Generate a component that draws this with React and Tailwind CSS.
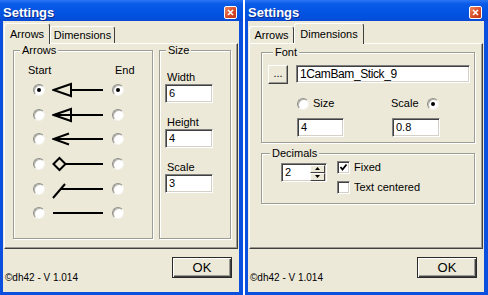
import { Fragment } from 'react'

const ARROWS = ['closed', 'closedLine', 'open', 'diamond', 'slash', 'line']

function CloseButton() {
  return (
    <span className="w-[13px] h-[13px] rounded-[2px] border border-white bg-[linear-gradient(135deg,#EC8A66_0%,#DA4A26_55%,#C2361A_100%)] flex items-center justify-center">
      <svg width="7" height="7" viewBox="0 0 7 7">
        <path d="M1 1 L6 6 M6 1 L1 6" stroke="white" strokeWidth="1.6" />
      </svg>
    </span>
  )
}

function TitleBar() {
  return (
    <div className="h-[21px] flex items-center justify-between pl-[3px] pr-[6px] pt-[3px] bg-[linear-gradient(180deg,#2B76F4_0%,#0A5BE8_18%,#0455E3_50%,#0250DD_85%,#0A48D2_100%)]">
      <span className="text-white font-bold text-[13px] leading-none [text-shadow:1px_1px_0_#0B2A8C]">
        Settings
      </span>
      <CloseButton />
    </div>
  )
}

function Radio({ checked }) {
  return (
    <span className="w-[12px] h-[12px] shrink-0 rounded-full bg-white border border-t-[#8E8E88] border-l-[#8E8E88] border-r-[#F4F3EE] border-b-[#F4F3EE] shadow-[inset_1px_1px_0_#B5B4AC] flex items-center justify-center">
      {checked && <span className="w-[4px] h-[4px] rounded-full bg-black" />}
    </span>
  )
}

function Checkbox({ checked }) {
  return (
    <span className="w-[13px] h-[13px] shrink-0 bg-white border border-t-[#808080] border-l-[#808080] border-r-white border-b-white shadow-[inset_1px_1px_0_#404040,inset_-1px_-1px_0_#D4D0C8] flex items-center justify-center">
      {checked && (
        <svg width="9" height="9" viewBox="0 0 9 9">
          <path d="M1.5 4 L3.5 6.5 L7.5 1.5" stroke="black" strokeWidth="1.8" fill="none" />
        </svg>
      )}
    </span>
  )
}

function Field({ value, className }) {
  return (
    <div className={`bg-white border border-t-[#808080] border-l-[#808080] border-r-white border-b-white shadow-[inset_1px_1px_0_#404040,inset_-1px_-1px_0_#D4D0C8] flex items-center pl-[3px] ${className}`}>
      {value}
    </div>
  )
}

function Group({ label, labelClass, className, children }) {
  return (
    <div className={`border border-[#9E9D93] shadow-[inset_1px_1px_0_#fff,1px_1px_0_#fff] ${className}`}>
      <div className={`-mt-[7px] w-fit px-[2px] bg-[#ECE9D8] leading-[13px] ${labelClass}`}>{label}</div>
      {children}
    </div>
  )
}

function ArrowShape({ kind }) {
  return (
    <svg className="ml-[7px] shrink-0" width="52" height="20" viewBox="0 0 52 20">
      {kind === 'closed' && (
        <>
          <polygon points="1.5,10 19,4 19,16" fill="none" stroke="black" strokeWidth="2" />
          <line x1="19" y1="10" x2="51" y2="10" stroke="black" strokeWidth="2" />
        </>
      )}
      {kind === 'closedLine' && (
        <>
          <polygon points="1.5,10 19,4 19,16" fill="none" stroke="black" strokeWidth="2" />
          <line x1="2" y1="10" x2="51" y2="10" stroke="black" strokeWidth="2" />
        </>
      )}
      {kind === 'open' && (
        <>
          <polyline points="17,4.5 1.5,10 17,15.5" fill="none" stroke="black" strokeWidth="2" />
          <line x1="2" y1="10" x2="51" y2="10" stroke="black" strokeWidth="2" />
        </>
      )}
      {kind === 'diamond' && (
        <>
          <polygon points="1.5,10 7.5,4 13.5,10 7.5,16" fill="none" stroke="black" strokeWidth="2" />
          <line x1="13.5" y1="10" x2="51" y2="10" stroke="black" strokeWidth="2" />
        </>
      )}
      {kind === 'slash' && (
        <>
          <line x1="1" y1="19" x2="13" y2="5" stroke="black" strokeWidth="2" />
          <line x1="8" y1="10" x2="51" y2="10" stroke="black" strokeWidth="2" />
        </>
      )}
      {kind === 'line' && <line x1="1" y1="10" x2="51" y2="10" stroke="black" strokeWidth="2" />}
    </svg>
  )
}

function Tabs({ active }) {
  const tab = 'border-t border-l border-t-white border-l-white border-r border-r-[#404040] rounded-t-[3px] flex items-center justify-center bg-[#ECE9D8]'
  return (
    <div className="h-[20px] flex items-end">
      {active === 'arrows' ? (
        <>
          <div className={`${tab} relative z-10 -mb-px h-[21px] w-[46px]`}>Arrows</div>
          <div className={`${tab} h-[17px] w-[65px]`}>Dimensions</div>
        </>
      ) : (
        <>
          <div className={`${tab} h-[17px] w-[45px]`}>Arrows</div>
          <div className={`${tab} relative z-10 -mb-px h-[21px] w-[70px]`}>Dimensions</div>
        </>
      )}
    </div>
  )
}

function Window({ active, children }) {
  return (
    <div className="w-[243px] h-[295px] flex flex-col">
      <TitleBar />
      <div className="flex-1 flex flex-col bg-[#ECE9D8] border-l-[3px] border-r-[4px] border-b-[3px] border-[#0B4FDF] px-[1px] pt-[2px]">
        <Tabs active={active} />
        <div className="h-[206px] border border-t-white border-l-white border-r-[#404040] border-b-[#404040] shadow-[inset_-1px_-1px_0_#9D9C92]">
          {children}
        </div>
        <div className="flex-1 flex justify-between pl-[1px] pr-[6px]">
          <span className="mt-[23px] text-[10px] leading-[12px]">©dh42 - V 1.014</span>
          <div className="mt-[8px] w-[60px] h-[21px] border border-[#2A2A2A] shadow-[inset_1px_1px_0_#fff,inset_-1px_-1px_0_#404040,inset_-2px_-2px_0_#9D9C92] flex items-center justify-center text-[13px]">
            OK
          </div>
        </div>
      </div>
    </div>
  )
}

function ArrowsPanel() {
  return (
    <div className="h-full flex gap-[6px] pl-[8px] pr-[5px] pt-[6px] pb-[9px]">
      <Group label="Arrows" labelClass="ml-[6px]" className="w-[140px]">
        <div className="mt-[7px] flex leading-[13px] pl-[14px]">
          <span className="w-[87px]">Start</span>
          <span>End</span>
        </div>
        <div className="mt-[1px]">
          {ARROWS.map((kind, i) => (
            <div key={kind} className="h-[24.6px] flex items-center pl-[19px]">
              <Radio checked={i === 0} />
              <ArrowShape kind={kind} />
              <span className="ml-[8px]">
                <Radio checked={i === 0} />
              </span>
            </div>
          ))}
        </div>
      </Group>
      <Group label="Size" labelClass="ml-[6px]" className="w-[72px]">
        <div className="pl-[5px] leading-[13px]">
          {[['Width', '6'], ['Height', '4'], ['Scale', '3']].map(([label, value], i) => (
            <Fragment key={label}>
              <div className={`${i === 0 ? 'mt-[14px]' : 'mt-[13px]'} pl-[2px]`}>{label}</div>
              <Field value={value} className="w-[48px] h-[19px]" />
            </Fragment>
          ))}
        </div>
      </Group>
    </div>
  )
}

function Spinner() {
  const btn = 'h-[8px] w-[15px] bg-[#ECE9D8] border-t border-l border-t-white border-l-white border-r border-b border-r-[#404040] border-b-[#404040] flex items-center justify-center'
  return (
    <div className="mt-[3px] w-[46px] h-[19px] bg-white border border-t-[#808080] border-l-[#808080] border-r-white border-b-white shadow-[inset_1px_1px_0_#404040,inset_-1px_-1px_0_#D4D0C8] flex items-center pl-[3px] pr-[1px]">
      <span className="flex-1">2</span>
      <div className="flex flex-col">
        <span className={btn}>
          <svg width="5" height="3" viewBox="0 0 5 3"><polygon points="2.5,0 5,3 0,3" fill="black" /></svg>
        </span>
        <span className={btn}>
          <svg width="5" height="3" viewBox="0 0 5 3"><polygon points="0,0 5,0 2.5,3" fill="black" /></svg>
        </span>
      </div>
    </div>
  )
}

function DimensionsPanel() {
  return (
    <div className="h-full flex flex-col gap-[10px] pl-[11px] pt-[8px]">
      <Group label="Font" labelClass="ml-[11px]" className="w-[214px] h-[91px]">
        <div className="mt-[6px] pl-[6px] flex">
          <div className="w-[20px] h-[19px] border-t border-l border-t-white border-l-white border-r border-b border-r-[#404040] border-b-[#404040] shadow-[inset_-1px_-1px_0_#9D9C92] flex items-center justify-center leading-none pb-[3px]">
            ...
          </div>
          <Field value="1CamBam_Stick_9" className="ml-[8px] w-[174px] h-[18px] text-[12px] tracking-[-0.4px]" />
        </div>
        <div className="pl-[35px] flex">
          <div className="w-[94px]">
            <div className="mt-[13px] h-[13px] flex items-center gap-[4px] leading-[13px]">
              <Radio />
              <span>Size</span>
            </div>
            <Field value="4" className="mt-[8px] w-[47px] h-[19px]" />
          </div>
          <div>
            <div className="mt-[13px] h-[13px] flex items-center gap-[8px] leading-[13px]">
              <span>Scale</span>
              <Radio checked />
            </div>
            <Field value="0.8" className="mt-[8px] ml-[1px] w-[48px] h-[19px]" />
          </div>
        </div>
      </Group>
      <Group label="Decimals" labelClass="ml-[8px]" className="w-[214px] h-[51px]">
        <div className="pl-[19px] flex items-start">
          <Spinner />
          <div className="ml-[10px] mt-[1px] flex flex-col gap-[7px] leading-[13px]">
            <div className="flex items-center gap-[4px]">
              <Checkbox checked />
              <span>Fixed</span>
            </div>
            <div className="flex items-center gap-[4px]">
              <Checkbox />
              <span>Text centered</span>
            </div>
          </div>
        </div>
      </Group>
    </div>
  )
}

export default function App() {
  return (
    <div className="w-[488px] h-[295px] flex gap-[2px] bg-white text-black text-[11px] font-['Liberation_Sans',Arial,sans-serif]">
      <Window active="arrows">
        <ArrowsPanel />
      </Window>
      <Window active="dimensions">
        <DimensionsPanel />
      </Window>
    </div>
  )
}
